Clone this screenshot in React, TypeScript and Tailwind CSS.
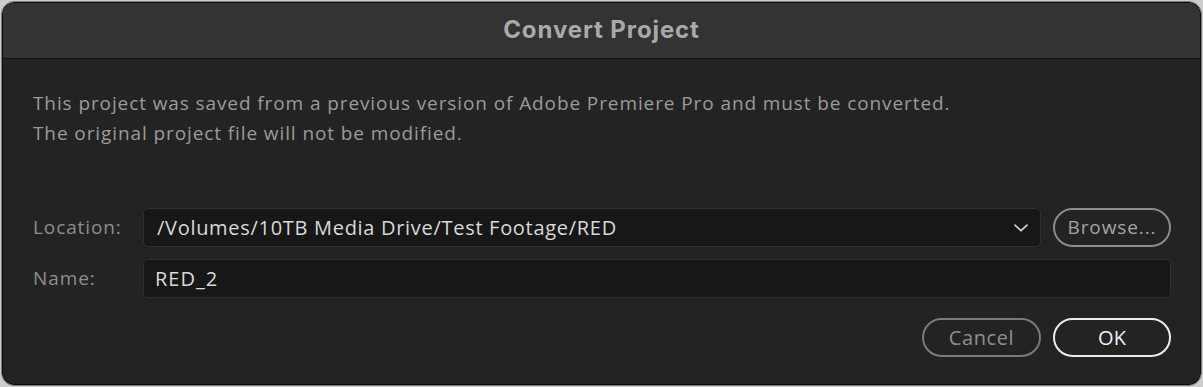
import React from "react";

export default function App() {
  const font = { fontFamily: '"Open Sans", "Noto Sans", sans-serif' };
  return (
    <div className="w-[1203px] h-[387px] bg-[#cdcdcd] pt-[1px] pl-[1px]" style={font}>
      <div className="w-[1201px] h-[385px] rounded-[13px] border border-[#7c7c7c] overflow-hidden">
        <div className="w-full h-full rounded-[12px] border border-[#0d0d0d] overflow-hidden flex flex-col bg-[#232323]">
          <div className="h-[56px] shrink-0 bg-[#333333] border-b border-[#101010] flex items-center justify-center">
            <span
              className="text-[24px] font-bold text-[#a9a9a9] tracking-[0.9px] -mt-[1px]"
              style={{ fontFamily: '"Inter", "Liberation Sans", sans-serif' }}
            >
              Convert Project
            </span>
          </div>
          <div className="flex-1 flex flex-col pl-[30px] pr-[29px] pt-[29px]">
            <div className="text-[19px] leading-[30px] text-[#9b9b9b] tracking-[0.9px]">
              <div>This project was saved from a previous version of Adobe Premiere Pro and must be converted.</div>
              <div>The original project file will not be modified.</div>
            </div>
            <div className="mt-[60px] flex items-center h-[39px]">
              <div className="w-[110px] text-[19px] text-[#8e8e8e] tracking-[0.9px]">Location:</div>
              <div className="flex-1 h-[39px] rounded-[5px] bg-[#171717] border border-[#2f2f2f] flex items-center pl-[13px] pr-[12px]">
                <span className="flex-1 text-[20px] text-[#d9d9d9] tracking-[0.7px]">/Volumes/10TB Media Drive/Test Footage/RED</span>
                <svg width="14" height="8" viewBox="0 0 14 8" fill="none">
                  <path d="M1 1.2 L7 6.6 L13 1.2" stroke="#cfcfcf" strokeWidth="1.8" strokeLinecap="round" strokeLinejoin="round" />
                </svg>
              </div>
              <button className="ml-[12px] w-[118px] h-[39px] rounded-full border-2 border-[#8c8c8c] text-[19px] text-[#a3a3a3] tracking-[0.9px] flex items-center justify-center">
                Browse...
              </button>
            </div>
            <div className="mt-[12px] flex items-center h-[39px]">
              <div className="w-[110px] text-[19px] text-[#8e8e8e] tracking-[0.9px]">Name:</div>
              <div className="flex-1 h-[39px] rounded-[5px] bg-[#171717] border border-[#2f2f2f] flex items-center pl-[11px]">
                <span className="text-[20px] text-[#d9d9d9] tracking-[1px]">RED_2</span>
              </div>
            </div>
            <div className="mt-[20px] flex justify-end gap-[12px]">
              <button className="w-[119px] h-[39px] rounded-full border-2 border-[#7b7b7b] text-[20px] text-[#8f8f8f] tracking-[0.6px] flex items-center justify-center">
                Cancel
              </button>
              <button className="w-[118px] h-[39px] rounded-full border-2 border-[#ececec] text-[20px] text-[#f0f0f0] flex items-center justify-center">
                OK
              </button>
            </div>
          </div>
        </div>
      </div>
    </div>
  );
}
